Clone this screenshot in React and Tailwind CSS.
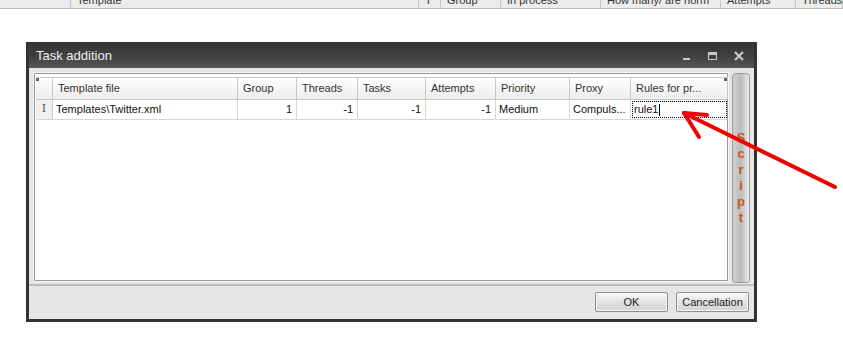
import React from 'react';

const font = { fontFamily: '"Liberation Sans", Arial, sans-serif' };

const topCols = [
  { w: 71, t: '' },
  { w: 348, t: 'Template' },
  { w: 22, t: 'T' },
  { w: 60, t: 'Group' },
  { w: 100, t: 'In process' },
  { w: 120, t: 'How many/ are norm' },
  { w: 75, t: 'Attempts' },
  { w: 47, t: 'Threads' },
];

const cols = [
  { w: 17, t: '' },
  { w: 185, t: 'Template file' },
  { w: 59, t: 'Group' },
  { w: 61, t: 'Threads' },
  { w: 68, t: 'Tasks' },
  { w: 70, t: 'Attempts' },
  { w: 74, t: 'Priority' },
  { w: 61, t: 'Proxy' },
  { w: 97, t: 'Rules for pr...' },
];

const row = [
  { v: 'Templates\\Twitter.xml', r: false },
  { v: '1', r: true },
  { v: '-1', r: true },
  { v: '-1', r: true },
  { v: '-1', r: true },
  { v: 'Medium', r: false },
  { v: 'Compuls...', r: false },
];

function TitleButtons() {
  return (
    <div className="flex items-center gap-[12px] pr-[8px]">
      <svg width="14" height="14" viewBox="0 0 14 14">
        <rect x="3" y="9" width="7" height="2" fill="#c9c9c9" />
      </svg>
      <svg width="14" height="14" viewBox="0 0 14 14">
        <rect x="2.5" y="3.5" width="8" height="7" fill="none" stroke="#c9c9c9" strokeWidth="1" />
        <rect x="2" y="3" width="9" height="3" fill="#c9c9c9" />
      </svg>
      <svg width="14" height="14" viewBox="0 0 14 14">
        <path d="M3 3 L11 11 M11 3 L3 11" stroke="#c9c9c9" strokeWidth="2.2" />
      </svg>
    </div>
  );
}

function Button({ children }) {
  return (
    <button className="w-[73px] h-[20px] rounded-[2px] border border-[#8e8e8e] bg-gradient-to-b from-[#fafafa] via-[#e2e2e2] to-[#d4d4d4] text-[11px] text-[#222] shadow-[inset_0_0_0_1px_#f4f4f4]">
      {children}
    </button>
  );
}

export default function App() {
  return (
    <div className="relative w-[843px] h-[359px] bg-white overflow-hidden text-[#222]" style={font}>
      {/* partial header of the list behind */}
      <div className="flex h-[9px] overflow-hidden bg-[#ececec] border-b border-[#b8b8b8]">
        {topCols.map((c, i) => (
          <div
            key={i}
            className="shrink-0 h-full border-r border-[#c4c4c4] pl-[6px] text-[11px] leading-[12px] text-[#333] whitespace-nowrap"
            style={{ width: c.w }}
          >
            <div className="-mt-[6px]">{c.t}</div>
          </div>
        ))}
      </div>

      {/* dialog */}
      <div className="ml-[26px] mt-[33px] w-[731px] h-[280px] border-[3px] border-[#333] flex flex-col">
        <div className="h-[26px] shrink-0 flex items-center justify-between bg-gradient-to-b from-[#353535] via-[#3f3f3f] to-[#575757] -mt-[3px] pt-[2px]">
          <span className="pl-[7px] text-[13px] text-[#f0f0f0]">Task addition</span>
          <TitleButtons />
        </div>

        <div className="flex-1 flex flex-col bg-[#e6e6e6]">
          <div className="flex gap-[3px] pt-[4px] pl-[4px] pr-[4px] h-[214px]">
            {/* grid */}
            <div className="w-[696px] h-[210px] border border-[#f4f4f4] shadow-[inset_0_0_0_1px_#9c9c9c] p-[1px]">
              <div className="w-full h-full bg-white pt-[3px] pl-[1px]">
                <div className="flex h-[23px] border-b border-[#c8c8c8]">
                  {cols.map((c, i) => (
                    <div
                      key={i}
                      className="relative shrink-0 h-full border-r border-t border-[#c8c8c8] bg-gradient-to-b from-[#ffffff] to-[#ececec] pl-[5px] flex items-center text-[11px] text-[#333] whitespace-nowrap"
                      style={{ width: c.w }}
                    >
                      {i === 0 && (
                        <div className="absolute left-0 top-0 w-[3px] h-[3px] bg-[#666]" />
                      )}
                      {i === cols.length - 1 && (
                        <div className="absolute right-0 top-0 w-[3px] h-[3px] bg-[#666]" />
                      )}
                      {c.t}
                    </div>
                  ))}
                </div>
                <div className="flex h-[20px] border-b border-[#d6d6d6]">
                  <div className="shrink-0 w-[17px] h-full border-r border-[#c8c8c8] bg-[#f0f0f0] flex items-center justify-center text-[11px] text-[#555]" style={{ fontFamily: '"DejaVu Serif", serif' }}>
                    I
                  </div>
                  {row.map((c, i) => (
                    <div
                      key={i}
                      className={`shrink-0 h-full border-r border-[#d6d6d6] flex items-center text-[11px] text-[#111] whitespace-nowrap ${c.r ? 'justify-end pr-[4px]' : 'pl-[3px]'}`}
                      style={{ width: cols[i + 1].w }}
                    >
                      {c.v}
                    </div>
                  ))}
                  <div className="shrink-0 w-[97px] h-full p-[1px]">
                    <div className="h-full border border-dotted border-[#000] flex items-center text-[11px] text-[#111] pl-[1px]">
                      rule1<span className="ml-[1px] w-px h-[12px] bg-black" />
                    </div>
                  </div>
                </div>
              </div>
            </div>

            {/* script pane */}
            <div className="w-[18px] h-[210px] mt-[1px] rounded-t-[4px] rounded-b-[3px] border border-[#9a9a9a] bg-gradient-to-r from-[#cfcfcf] via-[#bcbcbc] to-[#ececec] flex flex-col items-center justify-center">
              {['S', 'c', 'r', 'i', 'p', 't'].map((l, i) => (
                <span key={i} className="text-[13px] leading-[16px] font-bold text-[#c4571b]">
                  {l}
                </span>
              ))}
            </div>
          </div>

          <div className="flex-1 mt-[2px] border-t-2 border-[#bcbcbc] flex justify-end items-start gap-[8px] pt-[6px] pr-[5px]">
            <Button>OK</Button>
            <Button>Cancellation</Button>
          </div>
        </div>
      </div>

      {/* red arrow drawn over the screenshot */}
      <svg className="absolute left-0 top-0 pointer-events-none" width="843" height="359">
        <g stroke="#f00000" strokeWidth="4" strokeLinecap="round" fill="none">
          <path d="M835 187 L684 113" />
          <path d="M684 113 L707 115" />
          <path d="M684 113 L699 137" />
        </g>
      </svg>
    </div>
  );
}
